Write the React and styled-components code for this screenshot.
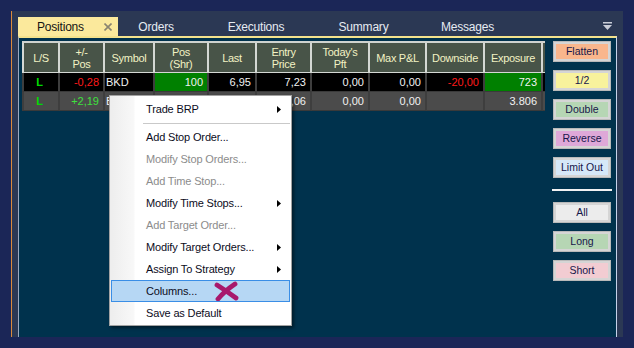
import React from "react";
import styled, { createGlobalStyle } from "styled-components";

const GlobalStyle = createGlobalStyle`
  html, body {
    margin: 0;
    padding: 0;
    background: #1b2657;
  }
  * {
    box-sizing: border-box;
  }
`;

const Screen = styled.div`
  width: 634px;
  height: 348px;
  padding: 11px 0 0 11px;
  font-family: "Liberation Sans", Arial, sans-serif;
`;

const Panel = styled.div`
  width: 612px;
  height: 326px;
  display: flex;
  flex-direction: column;
  background: #2b3854;
  border-left: 1px solid #d98a3c;
`;

const TabBar = styled.div`
  height: 25px;
  display: flex;
  align-items: flex-end;
  padding-left: 6px;
`;

const Tab = styled.div`
  width: ${(p) => p.$w}px;
  height: 19px;
  display: flex;
  align-items: center;
  justify-content: ${(p) => (p.$active ? "flex-start" : "center")};
  padding-left: ${(p) => (p.$active ? "19px" : "0")};
  background: ${(p) => (p.$active ? "#fbe99c" : "transparent")};
  color: ${(p) => (p.$active ? "#141414" : "#e6ebf2")};
  font-size: 12px;
  letter-spacing: -0.2px;
`;

const TabClose = styled.svg`
  margin-left: auto;
  margin-right: 6px;
`;

const TabMenu = styled.svg`
  margin-left: auto;
  margin-right: 11px;
  align-self: center;
  margin-top: 5px;
`;

const Content = styled.div`
  flex: 1;
  margin: 0 6px;
  position: relative;
  display: flex;
  align-items: flex-start;
  gap: 8px;
  padding: 3px 4px 0 3px;
  background: #00324d;
  border-top: 2px solid #f4e28c;
  border-left: 1px solid #9aa8c0;
  border-right: 1px solid #c6d2ea;
`;

const GridWrap = styled.div`
  width: 523px;
  overflow: hidden;
  border-top: 2px solid #cfd3cf;
`;

const Row = styled.div`
  display: flex;
  width: max-content;
`;

const HeadCell = styled.div`
  width: ${(p) => p.$w}px;
  height: 30px;
  flex: none;
  display: flex;
  align-items: center;
  justify-content: center;
  text-align: center;
  white-space: pre-line;
  line-height: 12px;
  font-size: 11px;
  letter-spacing: -0.3px;
  color: #f2f2c4;
  background: #485448;
  border-right: 2px solid #d4d8d4;
  border-bottom: 1px solid #d4d8d4;
  border-left: ${(p) => (p.$first ? "2px solid #d4d8d4" : "none")};
`;

const Cell = styled.div`
  width: ${(p) => p.$w}px;
  height: 19px;
  flex: none;
  line-height: 18px;
  font-size: 11px;
  padding: 0 4px 0 1px;
  text-align: ${(p) => p.$align || "right"};
  font-weight: ${(p) => (p.$bold ? "bold" : "normal")};
  color: ${(p) => p.$color || "#f2f2f2"};
  background: ${(p) => p.$bg};
  border-right: 2px solid #3e3e3e;
  border-bottom: 1px solid #3a3a3a;
  border-left: ${(p) => (p.$first ? "2px solid #3e3e3e" : "none")};
  white-space: nowrap;
  overflow: hidden;
`;

const SideColumn = styled.div`
  width: 58px;
  display: flex;
  flex-direction: column;
  gap: 8px;
`;

const ActionButton = styled.button`
  width: 58px;
  height: 21px;
  padding: 0;
  border: 3px solid #d5d5d5;
  outline: 1px solid #b9b9b9;
  outline-offset: -1px;
  background: ${(p) => p.$fill};
  color: #16164a;
  font-family: "Liberation Sans", Arial, sans-serif;
  font-size: 10.5px;
  line-height: 15px;
  cursor: pointer;
`;

const SideDivider = styled.div`
  width: 60px;
  height: 2px;
  margin: 3px 0 3px -1px;
  background: #f2f2f2;
`;

const Menu = styled.div`
  position: absolute;
  left: 90px;
  top: 57px;
  width: 183px;
  padding: 2px 1px 1px 1px;
  border: 1px solid #a2a2a2;
  background: linear-gradient(
    to right,
    #ededed 0px,
    #f8f8f8 24px,
    #ffffff 25px
  );
  box-shadow: 2px 2px 3px rgba(0, 0, 0, 0.45);
  font-size: 11px;
  letter-spacing: -0.15px;
`;

const MenuItem = styled.div`
  position: relative;
  height: 22px;
  display: flex;
  align-items: center;
  padding-left: 34px;
  padding-right: 8px;
  color: ${(p) => (p.$disabled ? "#8c8c8c" : "#0c0c1c")};
  background: ${(p) => (p.$hover ? "#b6d7f4" : "transparent")};
  border: 1px solid ${(p) => (p.$hover ? "#3a8ee6" : "transparent")};
`;

const MenuSeparator = styled.div`
  height: 6px;
  margin-left: 32px;
  display: flex;
  align-items: center;

  &::after {
    content: "";
    flex: 1;
    height: 1px;
    background: #c9c9c9;
  }
`;

const SubArrow = styled.svg`
  margin-left: auto;
`;

const Scribble = styled.svg`
  position: absolute;
  left: 102px;
  top: 0px;
`;

const columns = [
  { label: "L/S", w: 38 },
  { label: "+/-\nPos", w: 45 },
  { label: "Symbol", w: 50 },
  { label: "Pos\n(Shr)", w: 54 },
  { label: "Last", w: 48 },
  { label: "Entry\nPrice", w: 55 },
  { label: "Today's\nPft", w: 58 },
  { label: "Max P&L", w: 57 },
  { label: "Downside", w: 58 },
  { label: "Exposure", w: 58 },
  { label: "", w: 60 },
];

const GREEN = "#008000";
const RED = "#ff1a1a";

// second row sits mostly under the context menu
const rows = [
  {
    bg: "#000000",
    cells: [
      { v: "L", align: "center", color: "#00dc00", bold: true },
      { v: "-0,28", color: RED },
      { v: "BKD", align: "left" },
      { v: "100", bg: GREEN },
      { v: "6,95" },
      { v: "7,23" },
      { v: "0,00" },
      { v: "0,00" },
      { v: "-20,00", color: RED },
      { v: "723", bg: GREEN },
      { v: "" },
    ],
  },
  {
    bg: "#4b4b4b",
    cells: [
      { v: "L", align: "center", color: "#00dc00", bold: true },
      { v: "+2,19", color: "#3ee03e" },
      { v: "BRP", align: "left" },
      { v: "" },
      { v: "" },
      { v: "6,06" },
      { v: "0,00" },
      { v: "0,00" },
      { v: "" },
      { v: "3.806" },
      { v: "" },
    ],
  },
];

const actions = [
  { label: "Flatten", fill: "#f9b68c" },
  { label: "1/2", fill: "#f8f29c" },
  { label: "Double", fill: "#b6d6b4" },
  { label: "Reverse", fill: "#dea8d8" },
  { label: "Limit Out", fill: "#d6e8f8" },
];

const filters = [
  { label: "All", fill: "#ececec" },
  { label: "Long", fill: "#b6d6b4" },
  { label: "Short", fill: "#f2ccd2" },
];

const menuItems = [
  { label: "Add Stop Order..." },
  { label: "Modify Stop Orders...", disabled: true },
  { label: "Add Time Stop...", disabled: true },
  { label: "Modify Time Stops...", sub: true },
  { label: "Add Target Order...", disabled: true },
  { label: "Modify Target Orders...", sub: true },
  { label: "Assign To Strategy", sub: true },
  { label: "Columns...", hover: true, mark: true },
  { label: "Save as Default" },
];

const Arrow = () => (
  <SubArrow width="4" height="7" viewBox="0 0 4 7">
    <polygon points="0,0 4,3.5 0,7" fill="#000" />
  </SubArrow>
);

const App = () => {
  return (
    <Screen>
      <GlobalStyle />
      <Panel>
        <TabBar>
          <Tab $active $w={100}>
            Positions
            <TabClose width="8" height="8" viewBox="0 0 8 8">
              <path
                d="M0.5 0.5 L7.5 7.5 M7.5 0.5 L0.5 7.5"
                stroke="#8a8470"
                strokeWidth="1.6"
              />
            </TabClose>
          </Tab>
          <Tab $w={76}>Orders</Tab>
          <Tab $w={124}>Executions</Tab>
          <Tab $w={91}>Summary</Tab>
          <Tab $w={117}>Messages</Tab>
          <TabMenu width="9" height="8" viewBox="0 0 9 8">
            <rect x="0" y="0" width="9" height="1.5" fill="#c9cdd8" />
            <polygon points="0,3 9,3 4.5,8" fill="#c9cdd8" />
          </TabMenu>
        </TabBar>

        <Content>
          <GridWrap>
            <Row>
              {columns.map((c, i) => (
                <HeadCell key={i} $w={c.w} $first={i === 0}>
                  {c.label}
                </HeadCell>
              ))}
            </Row>
            {rows.map((r, ri) => (
              <Row key={ri}>
                {r.cells.map((c, ci) => (
                  <Cell
                    key={ci}
                    $w={columns[ci].w}
                    $first={ci === 0}
                    $align={c.align}
                    $color={c.color}
                    $bold={c.bold}
                    $bg={c.bg || r.bg}
                  >
                    {c.v}
                  </Cell>
                ))}
              </Row>
            ))}
          </GridWrap>

          <SideColumn>
            {actions.map((a) => (
              <ActionButton key={a.label} $fill={a.fill}>
                {a.label}
              </ActionButton>
            ))}
            <SideDivider />
            {filters.map((a) => (
              <ActionButton key={a.label} $fill={a.fill}>
                {a.label}
              </ActionButton>
            ))}
          </SideColumn>

          <Menu>
            <MenuItem>
              Trade BRP
              <Arrow />
            </MenuItem>
            <MenuSeparator />
            {menuItems.map((m) => (
              <MenuItem key={m.label} $disabled={m.disabled} $hover={m.hover}>
                {m.label}
                {m.sub && <Arrow />}
                {m.mark && (
                  <Scribble width="25" height="20" viewBox="0 0 25 20">
                    <path
                      d="M3 4 C8 7 15 12 22 17 M21 3 C15 7 9 12 4 18"
                      stroke="#a8186c"
                      strokeWidth="4.8"
                      strokeLinecap="round"
                      fill="none"
                    />
                  </Scribble>
                )}
              </MenuItem>
            ))}
          </Menu>
        </Content>
      </Panel>
    </Screen>
  );
};

export default App;
